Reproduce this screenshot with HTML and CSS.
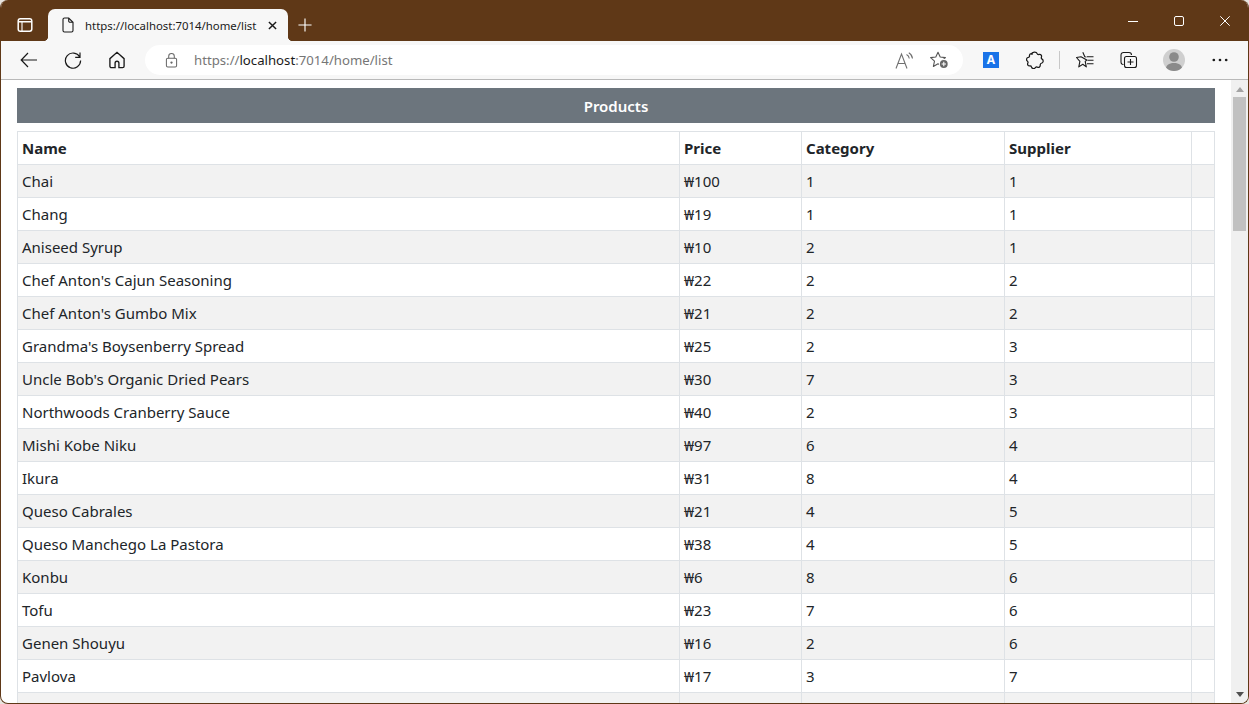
FILE: index.html
```html
<!DOCTYPE html>
<html lang="en">
<head>
  <meta charset="UTF-8">
  <title>https://localhost:7014/home/list</title>
  <link rel="stylesheet" href="styles.css">
</head>
<body>
  <div class="window">
    <div class="tabstrip">
      <div class="tab-actions">
        <svg class="icon" viewBox="0 0 16 16" fill="none" stroke="#fff" stroke-width="1.500"><rect x="1.200" y="1.700" width="13.600" height="12.600" rx="2.200"/><path d="M1.200 4.800h13.600"/><path d="M5 4.800v9.500" stroke-width="1.100"/></svg>
      </div>
      <div class="tab">
        <svg class="icon" viewBox="0 0 16 16" fill="none" stroke="#1a1a1a" stroke-width="1.100"><path d="M3 2.500a1.500 1.500 0 0 1 1.500-1.500h4.200L13 5.300v8.200a1.500 1.500 0 0 1-1.500 1.500h-7A1.500 1.500 0 0 1 3 13.500zM8.700 1v3a1.300 1.300 0 0 0 1.300 1.300h3"/></svg>
        <span class="tab-title">https://localhost:7014/home/list</span>
        <svg class="tab-close" viewBox="0 0 10 10" fill="none" stroke="#1a1a1a" stroke-width="1.600"><path d="M1 1l8 8M9 1l-8 8"/></svg>
      </div>
      <svg class="new-tab" viewBox="0 0 16 16" fill="none" stroke="#fff" stroke-width="1.300"><path d="M8 .5v15M.5 8h15"/></svg>
      <div class="window-controls">
        <span class="control"><svg viewBox="0 0 10 10" fill="none" stroke="#fff"><path d="M0 5.500h10"/></svg></span>
        <span class="control"><svg viewBox="0 0 10 10" fill="none" stroke="#fff"><rect x=".5" y=".5" width="9" height="9" rx="1.500"/></svg></span>
        <span class="control"><svg viewBox="0 0 10 10" fill="none" stroke="#fff"><path d="M.3.300l9.400 9.400M9.700.300L.3 9.700"/></svg></span>
      </div>
    </div>

    <div class="toolbar">
      <span class="tool"><svg class="icon" viewBox="0 0 18 18" fill="none" stroke="#1a1a1a" stroke-width="1.200"><path d="M17 9H1.200M8 2L1.200 9 8 16"/></svg></span>
      <span class="tool"><svg class="icon" viewBox="0 0 18 18" fill="none" stroke="#1a1a1a" stroke-width="1.200"><path d="M15.700 6A7.600 7.600 0 1 0 16.600 9.500M16 1.500V6.300H11.200"/></svg></span>
      <span class="tool"><svg class="icon" viewBox="0 0 16 16" fill="none" stroke="#1a1a1a" stroke-width="1.200"><path d="M6.300 14.800H3a1.300 1.300 0 0 1-1.300-1.300V6.800L8 1.200l6.300 5.600v6.700a1.300 1.300 0 0 1-1.300 1.300H9.700v-4a1.700 1.700 0 0 0-3.400 0z"/></svg></span>

      <div class="address">
        <svg class="lock" viewBox="0 0 14 16" fill="none" stroke="#666" stroke-width="1.100"><rect x="1.500" y="5.500" width="11" height="9.500" rx="1.500"/><path d="M4 5.500V3.500a3 3 0 0 1 6 0v2"/><circle cx="7" cy="10.200" r=".7" fill="#666"/></svg>
        <span class="url">https://<b>localhost</b>:7014/home/list</span>
        <svg class="read-aloud" viewBox="0 0 19 17" fill="none" stroke="#707070" stroke-width="1.100"><path d="M1 16.500L6.500 2 12 16.500M2.800 11.500h7.400M11.500 2.500a5 5 0 0 1 2.800 4M13.800.8a7.500 7.500 0 0 1 3.700 5.700"/></svg>
        <svg class="add-fav" viewBox="0 0 19 18" fill="none" stroke="#555" stroke-width="1.100" stroke-linejoin="round"><path d="M8 1.200L10.200 6l5.200.6-3.900 3.600 1.100 5.200L8 12.800l-4.600 2.600 1.100-5.200L.6 6.600 5.800 6z"/><circle cx="13.800" cy="13" r="5" fill="#fff" stroke="none"/><circle cx="13.800" cy="13" r="3.900" fill="#666" stroke="none"/><path d="M13.800 10.800v4.400M11.600 13H16" stroke="#fff"/></svg>
      </div>

      <span class="tool tool-first"><span class="translate">A</span></span>
      <span class="tool"><svg class="icon" viewBox="0 0 16 16" fill="none" stroke="#1a1a1a" stroke-width="1.100" stroke-linejoin="round"><path d="M4.800 2.700C5.400.6 9.300.4 10 2.400c.3.700 1 .8 1.700.7 1.700-.2 2.500 1 2 2.400-.3.800-.1 1.300.6 1.700 1.500 1.100 1.200 3.400-.6 3.700-.8.200-1.100.6-1 1.300.1 1.800-1.100 2.700-2.600 2.100-.7-.3-1.200-.2-1.700.5-1.100 1.400-3 1-3.500-.6-.2-.7-.7-1-1.500-.9-1.600.2-2.400-1.300-1.800-2.500.4-.7.200-1.300-.4-1.800-1.200-1-.8-3 .8-3.300.8-.1 1.200-.6 1.100-1.300-.2-1.500 1.100-2.500 2.400-1.800.1.100.2.100.3 0z"/></svg></span>
      <span class="divider"></span>
      <span class="tool tool-fav"><svg class="icon" viewBox="0 0 18 18" fill="none" stroke="#1a1a1a" stroke-width="1.100" stroke-linejoin="round"><path d="M6.800 1.300L8.800 5.800l1.700.2M10.800 9l-1.600 1.400 1.100 5.500-3.500-2.600-4 2.600 1.100-5.500L.5 6.500 5 5.800zM11 5.800h6.500M11.500 9.300h6M11 12.800h6.500"/></svg></span>
      <span class="tool"><svg class="icon" viewBox="0 0 18 18" fill="none" stroke="#1a1a1a" stroke-width="1.100"><path d="M3.500 13.500A2.500 2.500 0 0 1 1 11V4A2.500 2.500 0 0 1 3.500 1.500H9A2.500 2.500 0 0 1 11.500 4"/><rect x="4.500" y="5.500" width="12" height="11" rx="2"/><path d="M10.500 8v6M7.500 11h6"/></svg></span>
      <span class="tool tool-avatar"><span class="avatar"><svg viewBox="0 0 22 22" fill="#8a8a8a"><circle cx="11" cy="8" r="4.800"/><path d="M2.500 22c0-6 3.500-8 8.500-8s8.500 2 8.500 8z"/></svg></span></span>
      <span class="tool"><svg class="icon" viewBox="0 0 16 16" fill="#1a1a1a"><circle cx="2.500" cy="8" r="1.200"/><circle cx="8" cy="8" r="1.200"/><circle cx="13.500" cy="8" r="1.200"/></svg></span>
    </div>

    <div class="viewport">
      <main class="page">
        <div class="panel-title">Products</div>
        <table class="products">
          <colgroup>
            <col class="col-name">
            <col class="col-price">
            <col class="col-category">
            <col class="col-supplier">
            <col class="col-actions">
          </colgroup>
          <thead>
            <tr><th>Name</th><th>Price</th><th>Category</th><th>Supplier</th><th></th></tr>
          </thead>
          <tbody>
            <tr><td>Chai</td><td>₩100</td><td>1</td><td>1</td><td></td></tr>
            <tr><td>Chang</td><td>₩19</td><td>1</td><td>1</td><td></td></tr>
            <tr><td>Aniseed Syrup</td><td>₩10</td><td>2</td><td>1</td><td></td></tr>
            <tr><td>Chef Anton's Cajun Seasoning</td><td>₩22</td><td>2</td><td>2</td><td></td></tr>
            <tr><td>Chef Anton's Gumbo Mix</td><td>₩21</td><td>2</td><td>2</td><td></td></tr>
            <tr><td>Grandma's Boysenberry Spread</td><td>₩25</td><td>2</td><td>3</td><td></td></tr>
            <tr><td>Uncle Bob's Organic Dried Pears</td><td>₩30</td><td>7</td><td>3</td><td></td></tr>
            <tr><td>Northwoods Cranberry Sauce</td><td>₩40</td><td>2</td><td>3</td><td></td></tr>
            <tr><td>Mishi Kobe Niku</td><td>₩97</td><td>6</td><td>4</td><td></td></tr>
            <tr><td>Ikura</td><td>₩31</td><td>8</td><td>4</td><td></td></tr>
            <tr><td>Queso Cabrales</td><td>₩21</td><td>4</td><td>5</td><td></td></tr>
            <tr><td>Queso Manchego La Pastora</td><td>₩38</td><td>4</td><td>5</td><td></td></tr>
            <tr><td>Konbu</td><td>₩6</td><td>8</td><td>6</td><td></td></tr>
            <tr><td>Tofu</td><td>₩23</td><td>7</td><td>6</td><td></td></tr>
            <tr><td>Genen Shouyu</td><td>₩16</td><td>2</td><td>6</td><td></td></tr>
            <tr><td>Pavlova</td><td>₩17</td><td>3</td><td>7</td><td></td></tr>
            <tr><td></td><td></td><td></td><td></td><td></td></tr>
          </tbody>
        </table>
      </main>
      <div class="scrollbar">
        <span class="arrow arrow-up"></span>
        <div class="track"><div class="thumb"></div></div>
        <span class="arrow arrow-down"></span>
      </div>
    </div>
  </div>
</body>
</html>
```

FILE: styles.css
```css
html, body {
  margin: 0;
  height: 100%;
  overflow: hidden;
  background: #e8e4df;
}
body {
  font-family: "Noto Sans", "Open Sans", "Liberation Sans", sans-serif;
  color: #212529;
}
.window {
  box-sizing: border-box;
  display: flex;
  flex-direction: column;
  height: 704px;
  border: 1px solid #5f3817;
  border-top: 0;
  border-radius: 8px;
  overflow: hidden;
  background: #fff;
}

/* title bar */
.tabstrip {
  display: flex;
  align-items: flex-end;
  flex: none;
  height: 41px;
  background: #5f3817;
}
.icon {
  display: block;
  width: 16px;
  height: 16px;
}
.tab-actions {
  display: flex;
  align-items: center;
  justify-content: center;
  width: 47px;
  height: 32px;
}
.tab {
  position: relative;
  display: flex;
  align-items: center;
  box-sizing: border-box;
  width: 240px;
  height: 32px;
  padding: 0 11px 0 12px;
  background: #f7f7f7;
  border-radius: 7px 7px 0 0;
}
.tab::before,
.tab::after {
  content: "";
  position: absolute;
  bottom: 0;
  width: 5px;
  height: 5px;
}
.tab::before {
  left: -5px;
  background: radial-gradient(circle at 0 0, transparent 5px, #f7f7f7 5.500px);
}
.tab::after {
  right: -5px;
  background: radial-gradient(circle at 100% 0, transparent 5px, #f7f7f7 5.500px);
}
.tab-title {
  flex: 1;
  margin-left: 9px;
  font-size: 11.400px;
  color: #1a1a1a;
  white-space: nowrap;
}
.tab-close {
  width: 9px;
  height: 9px;
}
.new-tab {
  align-self: center;
  width: 14px;
  height: 14px;
  margin: 8px 0 0 10px;
}
.window-controls {
  display: flex;
  margin-left: auto;
  align-self: stretch;
}
.control {
  display: flex;
  align-items: center;
  justify-content: center;
  width: 46px;
}
.control svg {
  width: 10px;
  height: 10px;
  margin-top: 1px;
}

/* toolbar */
.toolbar {
  display: flex;
  align-items: center;
  flex: none;
  box-sizing: border-box;
  height: 39px;
  padding: 0 0 0 6px;
  background: #f7f7f7;
  border-bottom: 1px solid #b9b9b9;
}
.tool {
  display: flex;
  align-items: center;
  justify-content: center;
  width: 44px;
  height: 30px;
  margin-right: 1px;
}
.toolbar > .tool:nth-child(-n+3) {
  margin-right: 0;
}
.toolbar .tool .icon {
  width: 18px;
  height: 18px;
}
.address {
  display: flex;
  align-items: center;
  box-sizing: border-box;
  width: 818px;
  height: 30px;
  margin-left: 6px;
  padding: 0 14px 0 20px;
  background: #fff;
  border-radius: 15px;
}
.lock {
  width: 13px;
  height: 15px;
}
.url {
  flex: 1;
  margin-left: 16px;
  font-size: 13.200px;
  color: #767676;
}
.url b {
  font-weight: 400;
  color: #1a1a1a;
}
.read-aloud {
  width: 19px;
  height: 17px;
  margin-right: 16px;
}
.add-fav {
  width: 19px;
  height: 18px;
}
.tool-first {
  margin-left: 6px;
  margin-right: 0;
}
.tool-fav {
  margin-right: 0;
}
.tool-avatar {
  margin-right: 2px;
}
.translate {
  display: block;
  width: 16px;
  height: 16px;
  background: #1a73e8;
  color: #fff;
  font-size: 12px;
  font-weight: 700;
  line-height: 16px;
  text-align: center;
}
.divider {
  width: 1px;
  height: 18px;
  margin: 0 3px 0 1px;
  background: #c8c8c8;
}
.avatar {
  display: block;
  width: 22px;
  height: 22px;
  border-radius: 50%;
  overflow: hidden;
  background: #cfcfcf;
}
.avatar svg {
  display: block;
}

/* page */
.viewport {
  display: flex;
  flex: 1;
  min-height: 0;
}
.page {
  flex: 1;
  min-width: 0;
  padding: 8px 16px 0;
  overflow: hidden;
}
.panel-title {
  height: 35px;
  margin-bottom: 8px;
  background: #6c757d;
  color: #fff;
  font-size: 15px;
  font-weight: 600;
  line-height: 37px;
  text-align: center;
}
.products {
  width: 100%;
  table-layout: fixed;
  border-collapse: collapse;
  font-size: 15px;
}
.col-price { width: 122px; }
.col-category { width: 203px; }
.col-supplier { width: 187px; }
.col-actions { width: 23px; }
.products th,
.products td {
  box-sizing: border-box;
  height: 33px;
  padding: 0 4px;
  border: 1px solid #dee2e6;
  text-align: left;
  white-space: nowrap;
}
.products th {
  font-weight: 700;
}
.products tbody tr:nth-child(odd) {
  background: #f2f2f2;
}

/* scrollbar */
.scrollbar {
  display: flex;
  flex-direction: column;
  align-items: center;
  flex: none;
  width: 17px;
  background: #f0f0f0;
}
.arrow {
  flex: none;
  width: 0;
  height: 0;
  border-left: 4px solid transparent;
  border-right: 4px solid transparent;
}
.arrow-up {
  margin: 7px 0 5px;
  border-bottom: 5px solid #a3a3a3;
}
.arrow-down {
  margin: 5px 0 6px;
  border-top: 5px solid #505050;
}
.track {
  flex: 1;
  width: 13px;
}
.thumb {
  height: 134px;
  background: #c1c1c1;
}
```
